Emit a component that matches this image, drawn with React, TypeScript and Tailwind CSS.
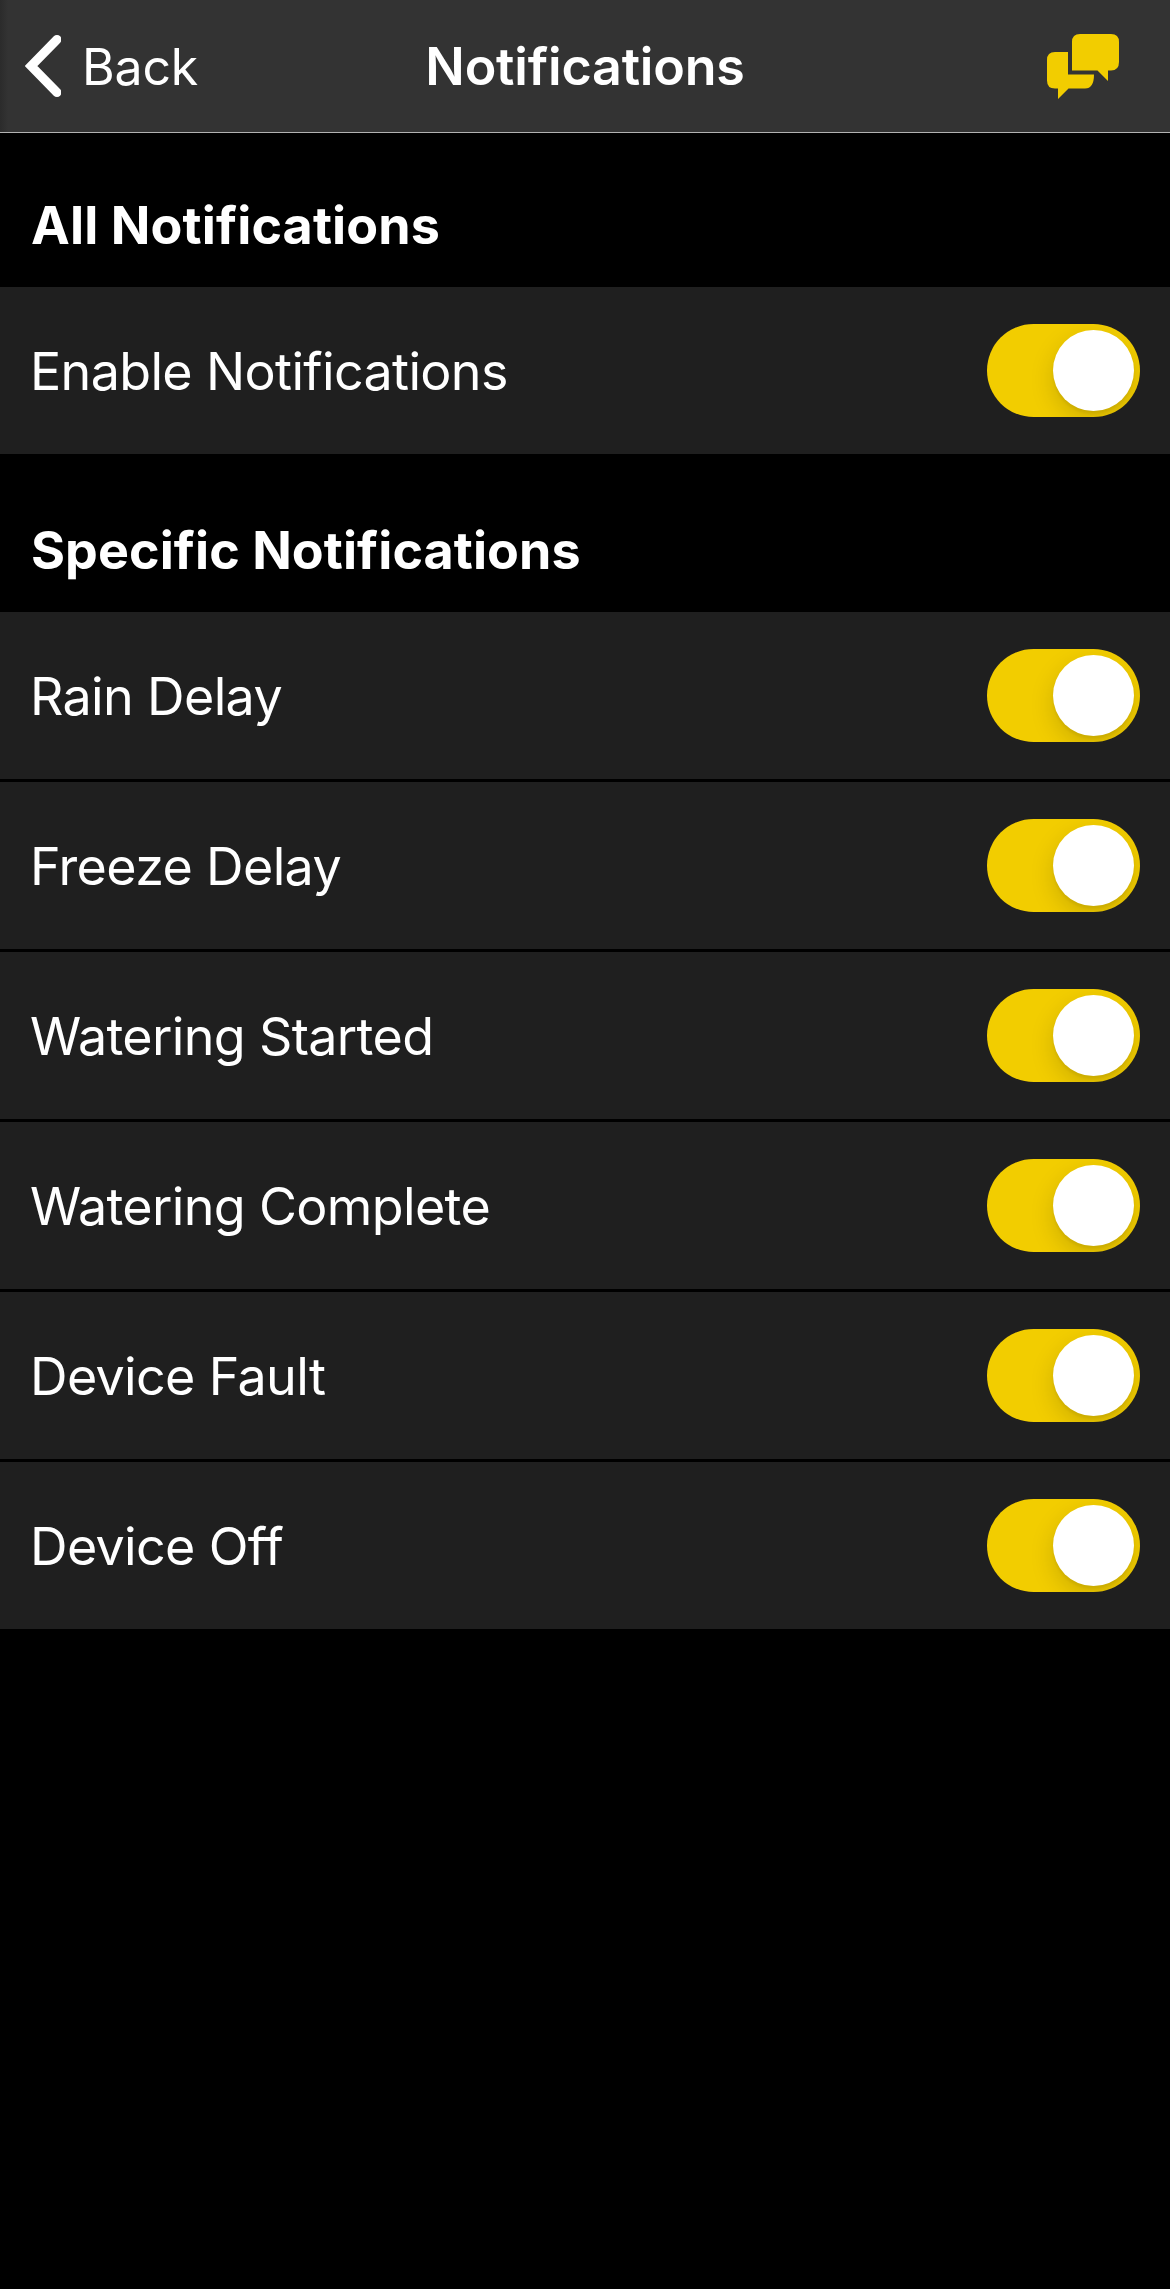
import React, { useState } from 'react';

interface NotificationItem {
  id: string;
  label: string;
}

const specificItems: NotificationItem[] = [
  { id: 'rain', label: 'Rain Delay' },
  { id: 'freeze', label: 'Freeze Delay' },
  { id: 'started', label: 'Watering Started' },
  { id: 'complete', label: 'Watering Complete' },
  { id: 'fault', label: 'Device Fault' },
  { id: 'off', label: 'Device Off' },
];

const ChatIcon: React.FC = () => (
  <svg width="72" height="65" viewBox="0 0 72 65" fill="#f2cd00">
    <path d="M33 0H64Q72 0 72 8V28Q72 36.500 64 36.500H61V47L50.500 36.500H25V8Q25 0 33 0Z" />
    <path d="M8 18H21V40.500H47Q47 54.500 38 54.500H21.500L11 65V54.500H8Q0 54.500 0 46.500V26Q0 18 8 18Z" />
  </svg>
);

interface ToggleProps {
  label: string;
  checked: boolean;
  onChange: () => void;
}

const ToggleRow: React.FC<ToggleProps> = ({ label, checked, onChange }) => (
  <div className="flex h-[167px] items-center justify-between bg-[#1f1f1f] pr-[30px] pl-[30px]">
    <span className="pt-[3px] text-[52px] leading-[64px] tracking-[-0.65px]">{label}</span>
    <button
      role="switch"
      aria-checked={checked}
      aria-label={label}
      onClick={onChange}
      className={`flex h-[93px] w-[153px] items-center overflow-hidden rounded-full p-[6px] ${
        checked ? 'justify-end bg-[#f2cd00]' : 'justify-start bg-[#39393d]'
      }`}
    >
      <span className="size-[81px] rounded-full bg-white shadow-[0_9px_24px_rgba(0,0,0,0.15),0_3px_3px_rgba(0,0,0,0.06)]" />
    </button>
  </div>
);

const App: React.FC = () => {
  const [allEnabled, setAllEnabled] = useState(true);
  const [disabled, setDisabled] = useState<string[]>([]);

  const toggle = (id: string) => {
    setDisabled((prev) => (prev.includes(id) ? prev.filter((x) => x !== id) : [...prev, id]));
  };

  return (
    <div className="min-h-screen bg-black font-['Inter',sans-serif] text-white">
      <header className="grid h-[133px] grid-cols-[1fr_auto_1fr] items-center border-b border-[#b3b3b3] bg-[linear-gradient(to_right,#2b2b2b,#333333_8px)]">
        <button className="flex items-center gap-[21px] pl-[25px]">
          <svg width="36" height="62" viewBox="0 0 36 62" fill="none" stroke="white" strokeWidth="9" strokeLinecap="round">
            <path d="M32 4.500L6 31L32 57.500" />
          </svg>
          <span className="pt-[2px] text-[50px] leading-[60px] tracking-[-0.2px]">Back</span>
        </button>
        <h1 className="pt-[2px] text-[52px] leading-[64px] font-semibold tracking-[-0.2px]">Notifications</h1>
        <button aria-label="Messages" className="justify-self-end pr-[51px]">
          <ChatIcon />
        </button>
      </header>

      <main>
        <h2 className="flex h-[154px] items-center pt-[32px] pl-[31px] text-[52px] leading-[64px] font-bold tracking-[0.12px]">
          All Notifications
        </h2>
        <ToggleRow label="Enable Notifications" checked={allEnabled} onChange={() => setAllEnabled(!allEnabled)} />

        <h2 className="flex h-[158px] items-center pt-[36px] pl-[31px] text-[52px] leading-[64px] font-bold tracking-[0.06px]">
          Specific Notifications
        </h2>
        <div className="flex flex-col gap-[3px]">
          {specificItems.map((item) => (
            <ToggleRow
              key={item.id}
              label={item.label}
              checked={!disabled.includes(item.id)}
              onChange={() => toggle(item.id)}
            />
          ))}
        </div>
      </main>
    </div>
  );
};

export default App;
